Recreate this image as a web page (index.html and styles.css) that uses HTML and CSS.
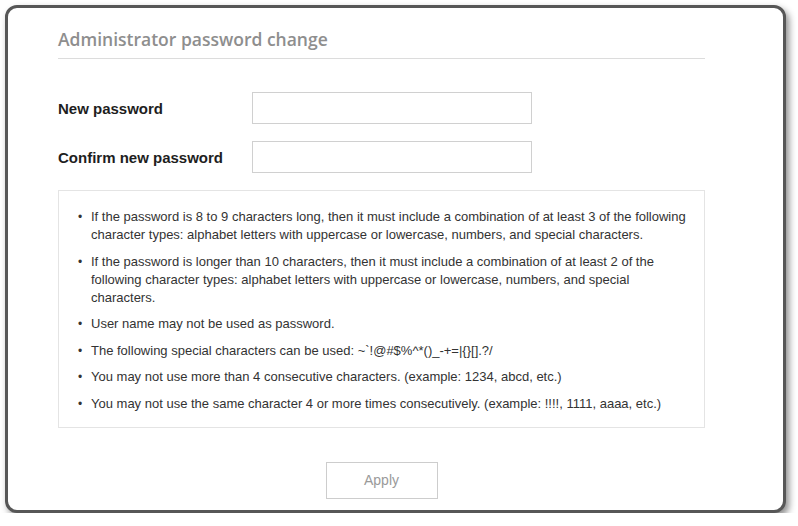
FILE: index.html
```html
<!DOCTYPE html>
<html lang="en">
<head>
    <meta charset="UTF-8">
    <meta name="viewport" content="width=device-width, initial-scale=1.0">
    <title>Administrator password change</title>
    <link rel="stylesheet" href="styles.css">
</head>
<body>
    <div class="panel">
        <div class="panel-body">
            <h2 class="panel-title">Administrator password change</h2>

            <div class="password-form">
                <div class="form-row">
                    <label class="form-label" for="new-password">New password</label>
                    <input type="password" class="text-input" id="new-password" autocomplete="off">
                </div>
                <div class="form-row">
                    <label class="form-label" for="confirm-password">Confirm new password</label>
                    <input type="password" class="text-input" id="confirm-password" autocomplete="off">
                </div>
            </div>

            <ul class="rules">
                <li>If the password is 8 to 9 characters long, then it must include a combination of at least 3 of the following character types: alphabet letters with uppercase or lowercase, numbers, and special characters.</li>
                <li>If the password is longer than 10 characters, then it must include a combination of at least 2 of the following character types: alphabet letters with uppercase or lowercase, numbers, and special characters.</li>
                <li>User name may not be used as password.</li>
                <li>The following special characters can be used: ~`!@#$%^*()_-+=|{}[].?/</li>
                <li>You may not use more than 4 consecutive characters. (example: 1234, abcd, etc.)</li>
                <li>You may not use the same character 4 or more times consecutively. (example: !!!!, 1111, aaaa, etc.)</li>
            </ul>

            <div class="actions">
                <button class="apply-button" id="apply-button">Apply</button>
            </div>
        </div>
    </div>
</body>
</html>
```

FILE: styles.css
```css
:root {
    --frame-color: #575757;
    --line-color: #dcdcdc;
    --input-border: #d0d0d0;
    --text-color: #333;
    --muted-text: #8e8e8e;
}

* {
    box-sizing: border-box;
    margin: 0;
    padding: 0;
}

body {
    background-color: #fff;
    font-family: 'Liberation Sans', Arial, sans-serif;
    color: var(--text-color);
}

.panel {
    margin: 5px 0 0 5px;
    width: 781px;
    height: 508px;
    background-color: #fff;
    border: 3px solid var(--frame-color);
    border-radius: 12px;
    box-shadow: 3px 4px 7px rgba(0, 0, 0, 0.45);
}

.panel-body {
    margin-left: 50px;
    width: 647px;
    padding-top: 18px;
}

.panel-title {
    font-family: 'Open Sans', sans-serif;
    font-size: 17.5px;
    font-weight: 600;
    line-height: 26px;
    color: var(--muted-text);
    padding-bottom: 6px;
    border-bottom: 1px solid var(--line-color);
}

.password-form {
    margin-top: 33px;
    display: flex;
    flex-direction: column;
    gap: 17px;
}

.form-row {
    display: flex;
    align-items: center;
    height: 32px;
}

.form-label {
    width: 194px;
    font-size: 15px;
    font-weight: 700;
    color: #1e1e1e;
}

.text-input {
    width: 280px;
    height: 32px;
    border: 1px solid var(--input-border);
    background-color: #fff;
    outline: none;
    padding: 0 8px;
    font-size: 13px;
}

.text-input:focus {
    border-color: #a8a8a8;
}

.rules {
    list-style: none;
    margin-top: 17px;
    border: 1px solid #e4e4e4;
    padding: 17px 18px 14px 19px;
    display: flex;
    flex-direction: column;
    gap: 8.5px;
    font-size: 13px;
    line-height: 18px;
}

.rules li {
    display: flex;
}

.rules li::before {
    content: "\2022";
    flex: 0 0 13px;
    font-size: 12px;
}

.actions {
    margin-top: 34px;
    display: flex;
    justify-content: center;
}

.apply-button {
    width: 112px;
    height: 37px;
    background-color: #fff;
    border: 1px solid #cdcdcd;
    color: #9a9a9a;
    font-family: 'Liberation Sans', Arial, sans-serif;
    font-size: 14px;
    cursor: pointer;
}

.apply-button:hover {
    color: #666;
    border-color: #aaa;
}
```
